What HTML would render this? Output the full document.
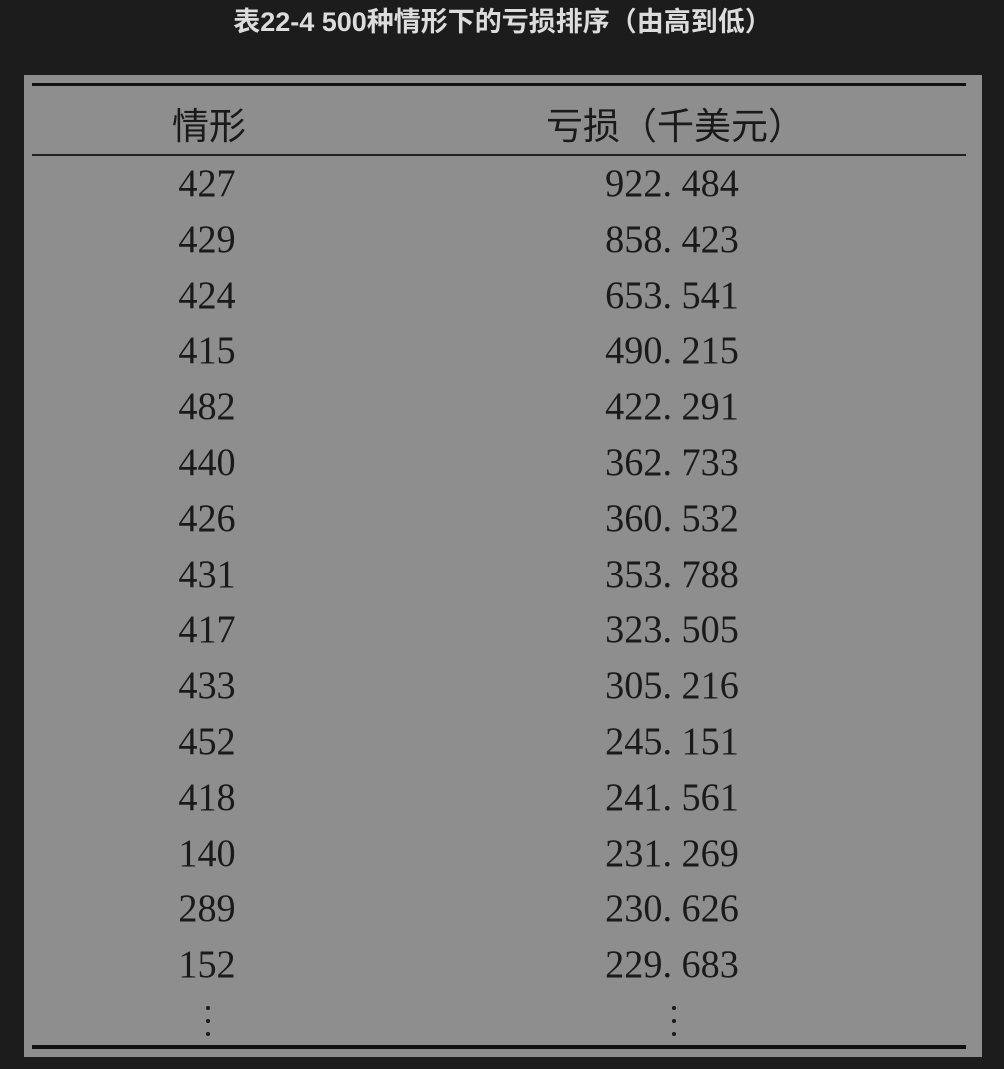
<!DOCTYPE html>
<html><head><meta charset="utf-8"><style>
body{margin:0;width:1004px;height:1069px;background:#1c1c1c;position:relative;overflow:hidden;font-family:"Liberation Serif","Noto Serif CJK SC",serif}
.t{position:absolute;top:0px;left:0;width:1005px;text-align:center;color:#dcdcdc;font:bold 27px "Liberation Sans","Noto Sans CJK SC",sans-serif}
.box{position:absolute;left:24px;top:75px;width:958px;height:982px;background:#8e8e8e}
.l{position:absolute;left:32px;width:934px;background:#111}
.c{position:absolute;width:300px;text-align:center;color:#1a1a1a;font-size:39px;line-height:40px;transform:scaleX(0.98)}
.h{position:absolute;color:#1a1a1a;font:37px "Noto Sans CJK SC",sans-serif;line-height:40px}
.d{position:absolute;width:4px;height:4px;border-radius:50%;background:#1a1a1a}
</style></head><body>
<div class="t">表22-4 500种情形下的亏损排序（由高到低）</div>
<div class="box"></div>
<div class="l" style="top:83px;height:3px"></div>
<div class="l" style="top:154px;height:2px;background:#222"></div>
<div class="l" style="top:1045px;height:4px"></div>
<div class="h" style="left:172px;top:103px">情形</div>
<div class="h" style="left:546px;top:103px">亏损（千美元）</div>
<div id="rows"></div>
<script>
var a=[["427","922. 484"],["429","858. 423"],["424","653. 541"],["415","490. 215"],["482","422. 291"],["440","362. 733"],["426","360. 532"],["431","353. 788"],["417","323. 505"],["433","305. 216"],["452","245. 151"],["418","241. 561"],["140","231. 269"],["289","230. 626"],["152","229. 683"]];
var h="";for(var i=0;i<a.length;i++){var y=164+i*55.8;
h+='<div class="c" style="left:57px;top:'+y+'px">'+a[i][0]+'</div><div class="c" style="left:522px;top:'+y+'px">'+a[i][1]+'</div>';}
[208,674].forEach(function(x){[1006,1019,1032].forEach(function(y){h+='<div class="d" style="left:'+(x-2)+'px;top:'+y+'px"></div>';});});
document.getElementById("rows").innerHTML=h;
</script>
</body></html>
